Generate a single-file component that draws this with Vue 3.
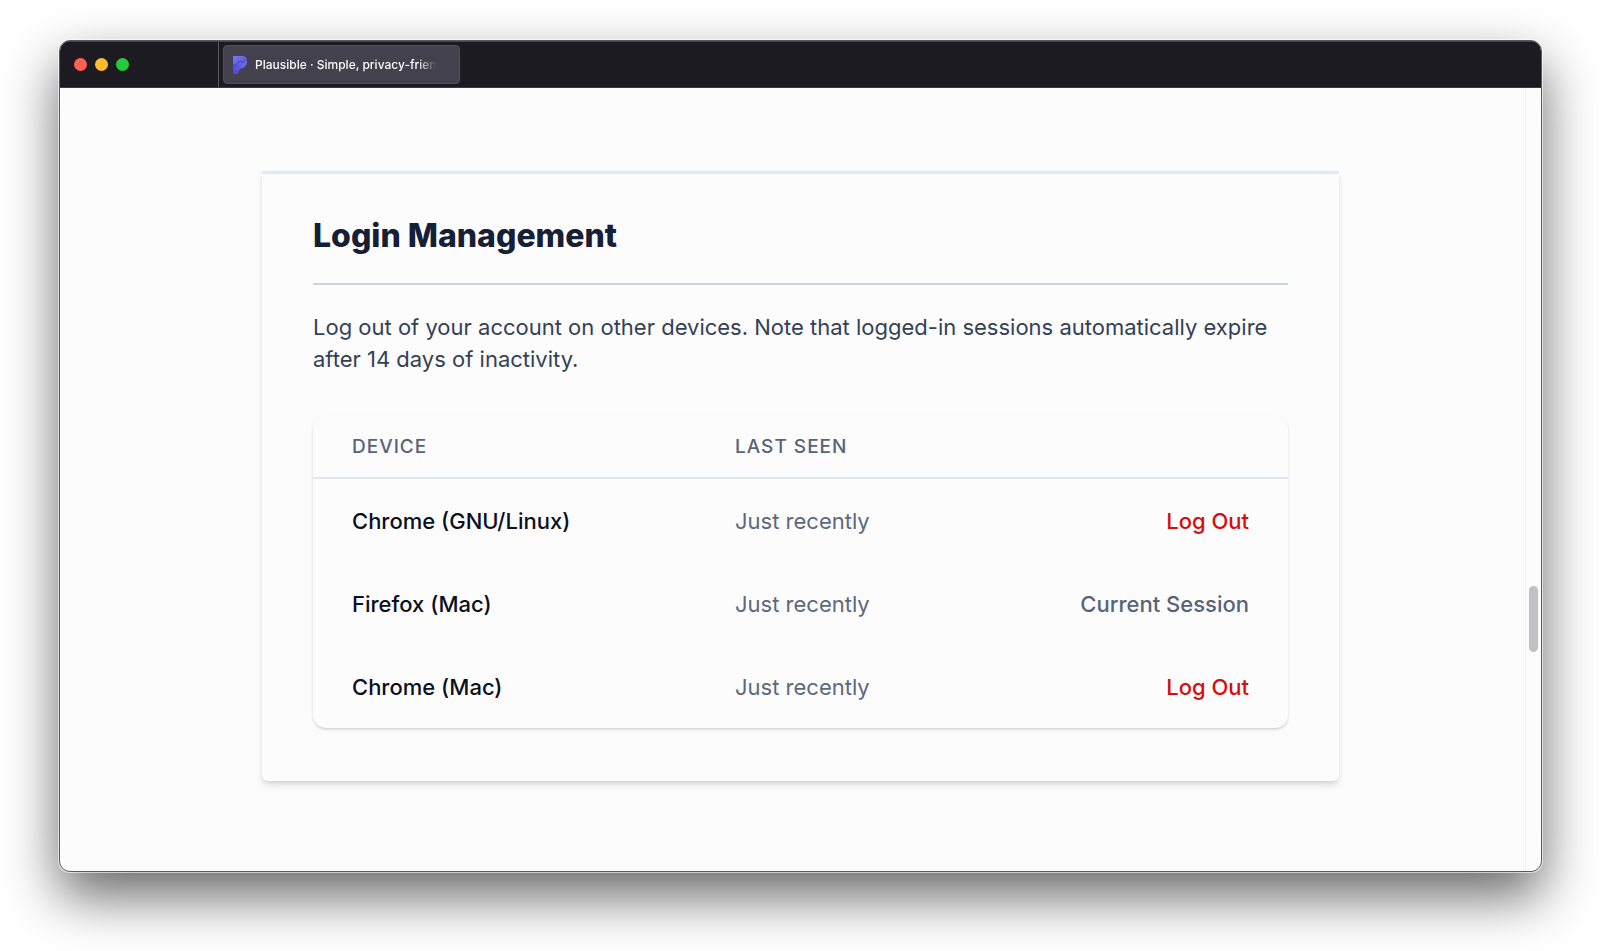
<script setup>
const sessions = [
  { device: 'Chrome (GNU/Linux)', lastSeen: 'Just recently', current: false },
  { device: 'Firefox (Mac)', lastSeen: 'Just recently', current: true },
  { device: 'Chrome (Mac)', lastSeen: 'Just recently', current: false },
]
</script>

<template>
  <div class="stage">
    <div class="window">
      <header class="titlebar">
        <div class="lights">
          <button class="light close" type="button" aria-label="Close"></button>
          <button class="light minimise" type="button" aria-label="Minimise"></button>
          <button class="light zoom" type="button" aria-label="Zoom"></button>
        </div>
        <button class="tab" type="button">
          <svg class="favicon" viewBox="0 0 14 18" aria-hidden="true">
            <defs>
              <linearGradient id="mark-top" x1="0" y1="0" x2="1" y2="1">
                <stop offset="0" stop-color="#7d79ee" />
                <stop offset="1" stop-color="#5450dc" />
              </linearGradient>
              <linearGradient id="mark-bottom" x1="0" y1="1" x2="1" y2="0">
                <stop offset="0" stop-color="#4b45d2" />
                <stop offset="1" stop-color="#7a76f2" />
              </linearGradient>
            </defs>
            <path d="M1 0h8c3 0 5 2.200 5 5.500S11.500 12 9 12.500c-2 0-2.500 1-3 2.500C5.500 17 4.500 18 3 18H0V1Q0 0 1 0Z" fill="url(#mark-bottom)" />
            <path d="M1 0h8c2.600 0 4 1.300 4.600 3.500C12.500 3.800 12 6 10 6 8 6 7.500 4.500 6 5.500S4 9 0 9V1Q0 0 1 0Z" fill="url(#mark-top)" />
            <path d="M0 9.300C4 9.300 4.500 6.500 6 5.700S8 6.300 10 6.300 12.500 4.200 13.600 3.800" fill="none" stroke="#4440b8" stroke-width="1" />
          </svg>
          <span class="tab-title">Plausible · Simple, privacy-friend</span>
        </button>
      </header>

      <div class="viewport">
        <main class="page">
          <section class="card">
            <h1>Login Management</h1>
            <p>
              Log out of your account on other devices. Note that logged-in sessions automatically expire
              after 14 days of inactivity.
            </p>
            <table>
              <thead>
                <tr>
                  <th class="device" scope="col">Device</th>
                  <th class="seen" scope="col">Last seen</th>
                  <td></td>
                </tr>
              </thead>
              <tbody>
                <tr v-for="session in sessions" :key="session.device">
                  <td class="name">{{ session.device }}</td>
                  <td class="muted">{{ session.lastSeen }}</td>
                  <td class="action">
                    <span v-if="session.current">Current Session</span>
                    <button v-else type="button">Log Out</button>
                  </td>
                </tr>
              </tbody>
            </table>
          </section>
        </main>
        <div class="scrollbar"><div class="thumb"></div></div>
      </div>
    </div>
  </div>
</template>

<style>
body {
  margin: 0;
  background: #fff;
}
</style>

<style scoped>
.stage {
  box-sizing: border-box;
  min-height: 100vh;
  padding: 40px 58px 79px 59px;
  display: flex;
  overflow: hidden;
  font-family: Inter, "Liberation Sans", sans-serif;
}
button {
  font: inherit;
  border: 0;
  padding: 0;
  background: none;
  cursor: pointer;
}
.window {
  flex: 1;
  min-width: 0;
  display: flex;
  flex-direction: column;
  border-radius: 11px;
  border: 1px solid #5c5c60;
  overflow: hidden;
  background: #fcfcfc;
  box-shadow: 0 0 0 1px rgba(255, 255, 255, 0.6), 0 24px 54px rgba(0, 0, 0, 0.6);
}
.titlebar {
  box-sizing: border-box;
  display: flex;
  height: 47px;
  background: #1c1b22;
  border-top: 1px solid #45454a;
  border-bottom: 1px solid #3a3942;
}
.lights {
  box-sizing: border-box;
  width: 159px;
  padding-left: 14px;
  display: flex;
  align-items: center;
  gap: 8px;
  border-right: 1px solid #5a5962;
}
.light {
  width: 13px;
  height: 13px;
  border-radius: 50%;
}
.close { background: #ff5f57; }
.minimise { background: #febc2e; }
.zoom { background: #28c840; }
.tab {
  box-sizing: border-box;
  width: 237px;
  margin: 3px 4px;
  padding: 0 12px 0 9px;
  display: flex;
  align-items: center;
  gap: 8px;
  border: 1px solid #4f4e59;
  border-radius: 4px;
  background: #42414d;
  color: #fbfbfe;
}
.favicon {
  flex: none;
  width: 14px;
  height: 18px;
}
.tab-title {
  white-space: nowrap;
  text-align: left;
  font-size: 12px;
  line-height: 16px;
  font-weight: 500;
  -webkit-mask-image: linear-gradient(to right, #000 86%, transparent 96%);
  mask-image: linear-gradient(to right, #000 86%, transparent 96%);
}
.viewport {
  flex: 1;
  display: flex;
}
.page {
  flex: 1;
  min-width: 0;
  padding: 83px 187px 87px 202px;
}
.scrollbar {
  position: relative;
  width: 15px;
  border-left: 1px solid #f0f1f3;
}
.thumb {
  position: absolute;
  top: 498px;
  left: 3px;
  width: 9px;
  height: 66px;
  border-radius: 5px;
  background: #c1c1c3;
}
.page {
  padding-right: 186px;
}
.card {
  padding: 46px 51px 53px;
  border-top: 3px solid #e0e7ff;
  border-radius: 0 0 6px 6px;
  background: #fcfcfc;
  box-shadow: 0 5px 9px rgba(0, 0, 0, 0.08), 0 3px 4px -1px rgba(0, 0, 0, 0.1);
}
h1 {
  margin: 0;
  padding-bottom: 31px;
  border-bottom: 2px solid #cbd5e1;
  font-size: 32px;
  line-height: 32px;
  font-weight: 800;
  color: #152036;
}
p {
  margin: 26px 0 41px;
  font-size: 22px;
  line-height: 32px;
  color: #334155;
}
table {
  width: 100%;
  table-layout: fixed;
  border-collapse: separate;
  border-spacing: 0;
  border-radius: 13px;
  box-shadow: 0 2px 3px rgba(0, 0, 0, 0.1), 0 1px 2px rgba(0, 0, 0, 0.08);
}
th,
td {
  padding: 0 39px;
  text-align: left;
}
thead th,
thead td {
  height: 61px;
  border-bottom: 2px solid #e2e8f0;
  font-size: 19px;
  line-height: 26px;
  font-weight: 500;
  letter-spacing: 1px;
  text-transform: uppercase;
  color: #56647a;
}
.device { width: 305px; }
.seen { width: 200px; }
tbody td {
  height: 83px;
  font-size: 22px;
  line-height: 32px;
}
.name {
  font-weight: 500;
  color: #0a1020;
}
.muted {
  color: #5b697e;
}
.action {
  text-align: right;
  font-weight: 500;
  color: #56647a;
}
.action button {
  color: #d90b0b;
}
</style>
